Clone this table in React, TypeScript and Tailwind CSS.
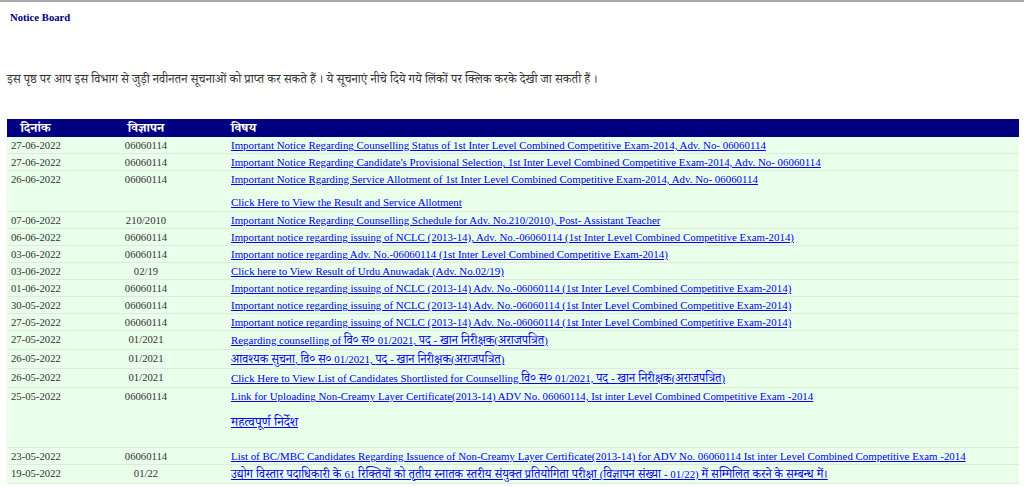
const serif = "font-['Liberation_Serif','Noto_Serif_Devanagari','Noto_Sans_Devanagari','Lohit_Devanagari','FreeSerif',serif]";

type Notice = {
  date: string;
  adv: string;
  links: string[];
  extra?: string;
};

const nclc =
  "Important notice regarding issuing of NCLC (2013-14) Adv. No.-06060114 (1st Inter Level Combined Competitive Exam-2014)";

const notices: Notice[] = [
  {
    date: "27-06-2022",
    adv: "06060114",
    links: ["Important Notice Regarding Counselling Status of 1st Inter Level Combined Competitive Exam-2014, Adv. No- 06060114 "],
  },
  {
    date: "27-06-2022",
    adv: "06060114",
    links: ["Important Notice Regarding Candidate's Provisional Selection, 1st Inter Level Combined Competitive Exam-2014, Adv. No- 06060114 "],
  },
  {
    date: "26-06-2022",
    adv: "06060114",
    links: [
      "Important Notice Rgarding Service Allotment of 1st Inter Level Combined Competitive Exam-2014, Adv. No- 06060114",
      "Click Here to View the Result and Service Allotment ",
    ],
  },
  {
    date: "07-06-2022",
    adv: "210/2010",
    links: ["Important Notice Regarding Counselling Schedule for Adv. No.210/2010), Post- Assistant Teacher "],
  },
  {
    date: "06-06-2022",
    adv: "06060114",
    links: ["Important notice regarding issuing of NCLC (2013-14), Adv. No.-06060114 (1st Inter Level Combined Competitive Exam-2014)"],
  },
  {
    date: "03-06-2022",
    adv: "06060114",
    links: ["Important notice regarding Adv. No.-06060114 (1st Inter Level Combined Competitive Exam-2014)"],
  },
  {
    date: "03-06-2022",
    adv: "02/19",
    links: ["Click here to View Result of Urdu Anuwadak (Adv. No.02/19)"],
  },
  { date: "01-06-2022", adv: "06060114", links: [nclc] },
  { date: "30-05-2022", adv: "06060114", links: [nclc] },
  { date: "27-05-2022", adv: "06060114", links: [nclc] },
  {
    date: "27-05-2022",
    adv: "01/2021",
    links: ["Regarding counselling of वि० स० 01/2021, पद - खान निरीक्षक(अराजपत्रित)"],
  },
  {
    date: "26-05-2022",
    adv: "01/2021",
    links: ["आवश्यक सुचना, वि० स० 01/2021, पद - खान निरीक्षक(अराजपत्रित)"],
  },
  {
    date: "26-05-2022",
    adv: "01/2021",
    links: ["Click Here to View List of Candidates Shortlisted for Counselling वि० स० 01/2021, पद - खान निरीक्षक(अराजपत्रित)"],
  },
  {
    date: "25-05-2022",
    adv: "06060114",
    links: ["Link for Uploading Non-Creamy Layer Certificate(2013-14) ADV No. 06060114, Ist inter Level Combined Competitive Exam -2014"],
    extra: "महत्वपूर्ण निर्देश",
  },
  {
    date: "23-05-2022",
    adv: "06060114",
    links: ["List of BC/MBC Candidates Regarding Issuence of Non-Creamy Layer Certificate(2013-14) for ADV No. 06060114 Ist inter Level Combined Competitive Exam -2014"],
  },
  {
    date: "19-05-2022",
    adv: "01/22",
    links: ["उद्योग विस्तार पदाधिकारी के 61 रिक्तियों को तृतीय स्नातक स्तरीय संयुक्त प्रतियोगिता परीक्षा (विज्ञापन संख्या - 01/22) में सम्मिलित करने के सम्बन्ध में।"],
  },
];

// the hindi runs come out bigger than the latin ones on the original page
function Mixed({ text }: { text: string }) {
  const parts = text.split(/([\u0900-\u097F][\u0900-\u097F\s]*)/);
  return (
    <>
      {parts.map((p, i) =>
        /[\u0900-\u097F]/.test(p) ? (
          <span key={i} className="text-[12px] leading-[18px]">
            {p}
          </span>
        ) : (
          p
        )
      )}
    </>
  );
}

export default function App() {
  return (
    <div className={`min-h-[487px] border-t-2 border-[#a9a9a9] bg-white ${serif}`}>
      <h1 className="pl-[10px] pt-[9px] text-[10.7px] leading-[13px] font-bold text-[#000080]">
        Notice Board
      </h1>

      <p className="mt-[46px] pl-[7px] text-[12.3px] leading-[18px] text-[#333]">
        इस पृष्ठ पर आप इस विभाग से जुड़ी नवीनतन सूचनाओं को प्राप्त कर सकते हैं । ये सूचनाएं नीचे दिये गये लिंकों पर क्लिक करके देखी जा सकती हैं ।
      </p>

      <table className="mt-[31px] ml-[7px] w-[1012px] table-fixed border-collapse text-[10.7px] leading-[16px]">
        <colgroup>
          <col className="w-[57px]" />
          <col className="w-[164px]" />
          <col />
        </colgroup>
        <thead>
          <tr className="h-[18px] bg-[#000080] text-white">
            <th className="p-0 text-center text-[13px] leading-[18px] font-bold">दिनांक</th>
            <th className="p-0 text-center text-[13px] leading-[18px] font-bold">विज्ञापन</th>
            <th className="p-0 pl-[3px] text-left text-[13px] leading-[18px] font-bold">विषय</th>
          </tr>
        </thead>
        <tbody>
          {notices.map((n, i) => (
            <tr key={i} className="border-b border-[#dfeadf] bg-[#e9ffe9] align-top">
              <td className="p-0 pl-[4px] text-[#333]">{n.date}</td>
              <td className="p-0 text-center text-[#333]">{n.adv}</td>
              <td className="p-0 pl-[3px] text-[10.9px]">
                {n.links.map((l, j) => (
                  <div key={j} className={j > 0 ? "mt-[7px] pb-[1px]" : ""}>
                    <a href="#" className="text-[#0000ee] underline">
                      <Mixed text={l} />
                    </a>
                  </div>
                ))}
                {n.extra && (
                  <div className="mt-[8px] pb-[15px] text-[13px] leading-[20px]">
                    <a href="#" className="text-[#0000ee] underline">
                      {n.extra}
                    </a>
                  </div>
                )}
              </td>
            </tr>
          ))}
        </tbody>
      </table>
    </div>
  );
}
